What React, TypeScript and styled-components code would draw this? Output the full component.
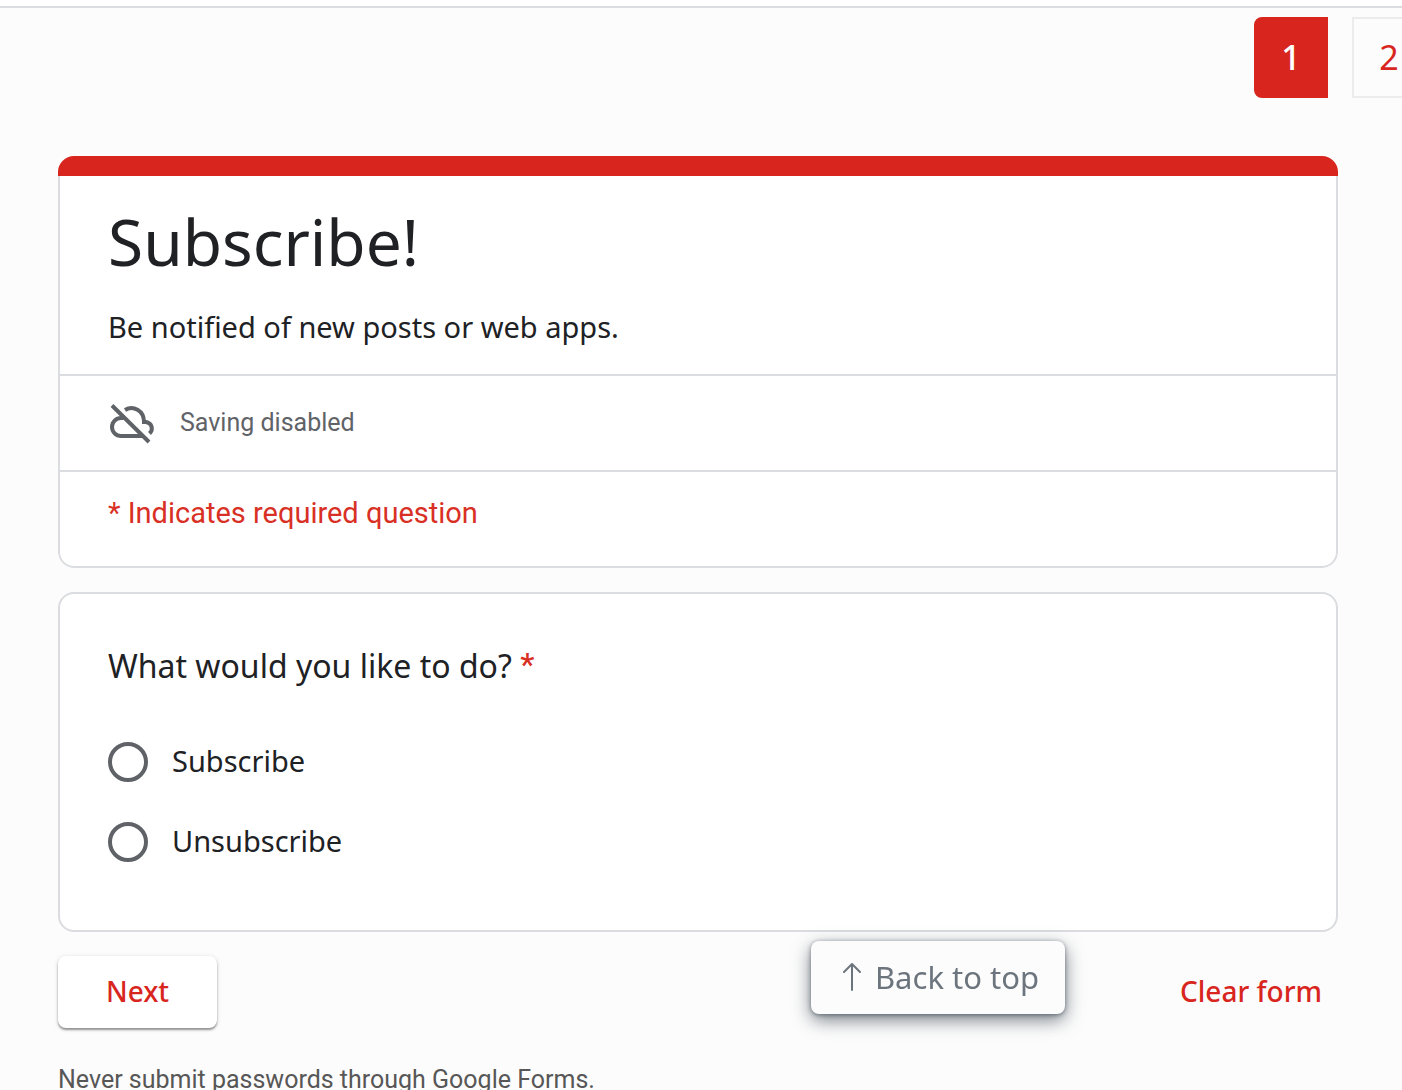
import React from "react";
import styled, { createGlobalStyle } from "styled-components";

const red = "#d8261f";
const line = "#dadce0";

const GlobalStyle = createGlobalStyle`
  * { box-sizing: border-box; }
  body {
    margin: 0;
    background: #fcfcfc;
    color: #202124;
    font-family: "Noto Sans", sans-serif;
    overflow: hidden;
  }
  button { font: inherit; cursor: pointer; }
`;

const TopStrip = styled.div`
  height: 8px;
  border-bottom: 2px solid ${line};
  background: #fff;
`;

const Pager = styled.nav`
  display: flex;
  justify-content: flex-end;
  gap: 24px;
  margin: 9px -24px 58px 0;
`;

const PageButton = styled.button<{ $current?: boolean }>`
  flex: none;
  width: 74px;
  height: 81px;
  padding: 0 0 2px;
  border: 2px solid ${(p) => (p.$current ? red : "#ececec")};
  border-radius: ${(p) => (p.$current ? "8px 0 0 8px" : "0")};
  background: ${(p) => (p.$current ? red : "#fcfcfc")};
  color: ${(p) => (p.$current ? "#fff" : red)};
  font-size: 34px;
  font-weight: ${(p) => (p.$current ? 500 : 400)};
`;

const Form = styled.form`
  margin: 0 64px 0 58px;
`;

const Card = styled.section`
  border: 2px solid ${line};
  border-radius: 16px;
  background: #fff;
`;

const HeaderGroup = styled.div`
  border-radius: 16px;
  overflow: hidden;
`;

const AccentBar = styled.div`
  height: 20px;
  background: ${red};
`;

const HeaderCard = styled(Card)`
  border-top: 0;
  border-radius: 0 0 16px 16px;
`;

const Intro = styled.div`
  padding: 24px 48px 28px;
`;

const Title = styled.h1`
  margin: 0;
  font-size: 64px;
  font-weight: 400;
  line-height: 84px;
`;

const Description = styled.p`
  margin: 24px 0 0;
  font-size: 29px;
  line-height: 38px;
`;

const Row = styled.div`
  display: flex;
  align-items: center;
  gap: 24px;
  height: 96px;
  padding: 0 48px;
  border-top: 2px solid ${line};
`;

const RequiredRow = styled(Row)`
  padding-bottom: 12px;
`;

const Saving = styled.span`
  color: #5f6368;
  font-family: Roboto, sans-serif;
  font-size: 25px;
  line-height: 32px;
`;

const Required = styled.span`
  color: #d93025;
  font-family: Roboto, sans-serif;
  font-size: 29px;
`;

const Question = styled(Card)`
  margin-top: 24px;
  padding: 48px 48px 68px;
`;

const Options = styled.fieldset`
  display: flex;
  flex-direction: column;
  gap: 40px;
  margin: 0;
  padding: 0;
  border: 0;
`;

const Legend = styled.legend`
  padding: 0;
  margin-bottom: 52px;
  font-size: 32px;
  line-height: 48px;
`;

const Star = styled.span`
  color: #d93025;
  font-family: Roboto, sans-serif;
  font-weight: 500;
  line-height: 32px;
  vertical-align: 3px;
`;

const Option = styled.label`
  display: flex;
  align-items: flex-start;
  gap: 24px;
  height: 40px;
  font-size: 29px;
  line-height: 38px;
`;

const Radio = styled.input`
  appearance: none;
  width: 40px;
  height: 40px;
  margin: 0;
  border: 4px solid #5f6368;
  border-radius: 50%;
  &:checked { border-color: ${red}; background: radial-gradient(${red} 10px, transparent 11px); }
`;

const Actions = styled.div`
  display: flex;
  align-items: center;
  justify-content: space-between;
  padding: 24px 16px 0 0;
`;

const FormButton = styled.button`
  height: 72px;
  padding: 0 0 2px;
  border: 0;
  background: none;
  color: ${red};
  font-size: 28px;
  font-weight: 500;
`;

const NextButton = styled(FormButton)`
  width: 159px;
  border-radius: 8px;
  background: #fff;
  box-shadow: 0 2px 2px rgba(0, 0, 0, 0.36), 0 1px 5px rgba(0, 0, 0, 0.14);
`;

const BackToTop = styled.button`
  position: fixed;
  right: 337px;
  bottom: 76px;
  display: flex;
  align-items: center;
  justify-content: center;
  gap: 14px;
  width: 254px;
  height: 73px;
  padding: 0 0 2px 6px;
  border: 0;
  border-radius: 8px;
  background: #fcfcfc;
  box-shadow: 0 6px 18px rgba(33, 47, 60, 0.6), 0 1px 4px rgba(33, 47, 60, 0.5);
  color: #6c757d;
  font-size: 31px;
`;

const Notice = styled.p`
  margin: 36px 0 0;
  color: #575757;
  font-family: Roboto, sans-serif;
  font-size: 25px;
  line-height: 32px;
`;

function CloudOffIcon() {
  return (
    <svg width="48" height="48" viewBox="0 0 48 48" fill="none" stroke="#5f6368" strokeWidth="4" aria-hidden="true">
      <path d="M4 6.5L41 43" />
      <path d="M15.5 19H13A9 9 0 0 0 13 37H35" />
      <path d="M17 11C25 6 36 11.500 36 23H38C43.500 24 46 30 41.500 34.500" />
    </svg>
  );
}

function ArrowUpIcon() {
  return (
    <svg width="18" height="28" viewBox="0 0 18 28" fill="none" stroke="currentColor" strokeWidth="2" aria-hidden="true">
      <path d="M9 27V2M1 9l8-8 8 8" strokeLinecap="round" strokeLinejoin="round" />
    </svg>
  );
}

export default function App() {
  return (
    <>
      <GlobalStyle />
      <TopStrip />
      <Pager aria-label="Pages">
        <PageButton type="button" $current aria-current="page">1</PageButton>
        <PageButton type="button">2</PageButton>
      </Pager>
      <Form onSubmit={(e) => e.preventDefault()}>
        <HeaderGroup>
          <AccentBar />
          <HeaderCard>
            <Intro>
              <Title>Subscribe!</Title>
              <Description>Be notified of new posts or web apps.</Description>
            </Intro>
            <Row>
              <CloudOffIcon />
              <Saving>Saving disabled</Saving>
            </Row>
            <RequiredRow>
              <Required>* Indicates required question</Required>
            </RequiredRow>
          </HeaderCard>
        </HeaderGroup>
        <Question>
          <Options>
            <Legend>What would you like to do? <Star>*</Star></Legend>
            <Option><Radio type="radio" name="action" value="subscribe" />Subscribe</Option>
            <Option><Radio type="radio" name="action" value="unsubscribe" />Unsubscribe</Option>
          </Options>
        </Question>
        <Actions>
          <NextButton type="submit">Next</NextButton>
          <FormButton type="reset">Clear form</FormButton>
        </Actions>
        <Notice>Never submit passwords through Google Forms.</Notice>
      </Form>
      <BackToTop type="button" onClick={() => window.scrollTo(0, 0)}>
        <ArrowUpIcon />
        Back to top
      </BackToTop>
    </>
  );
}
